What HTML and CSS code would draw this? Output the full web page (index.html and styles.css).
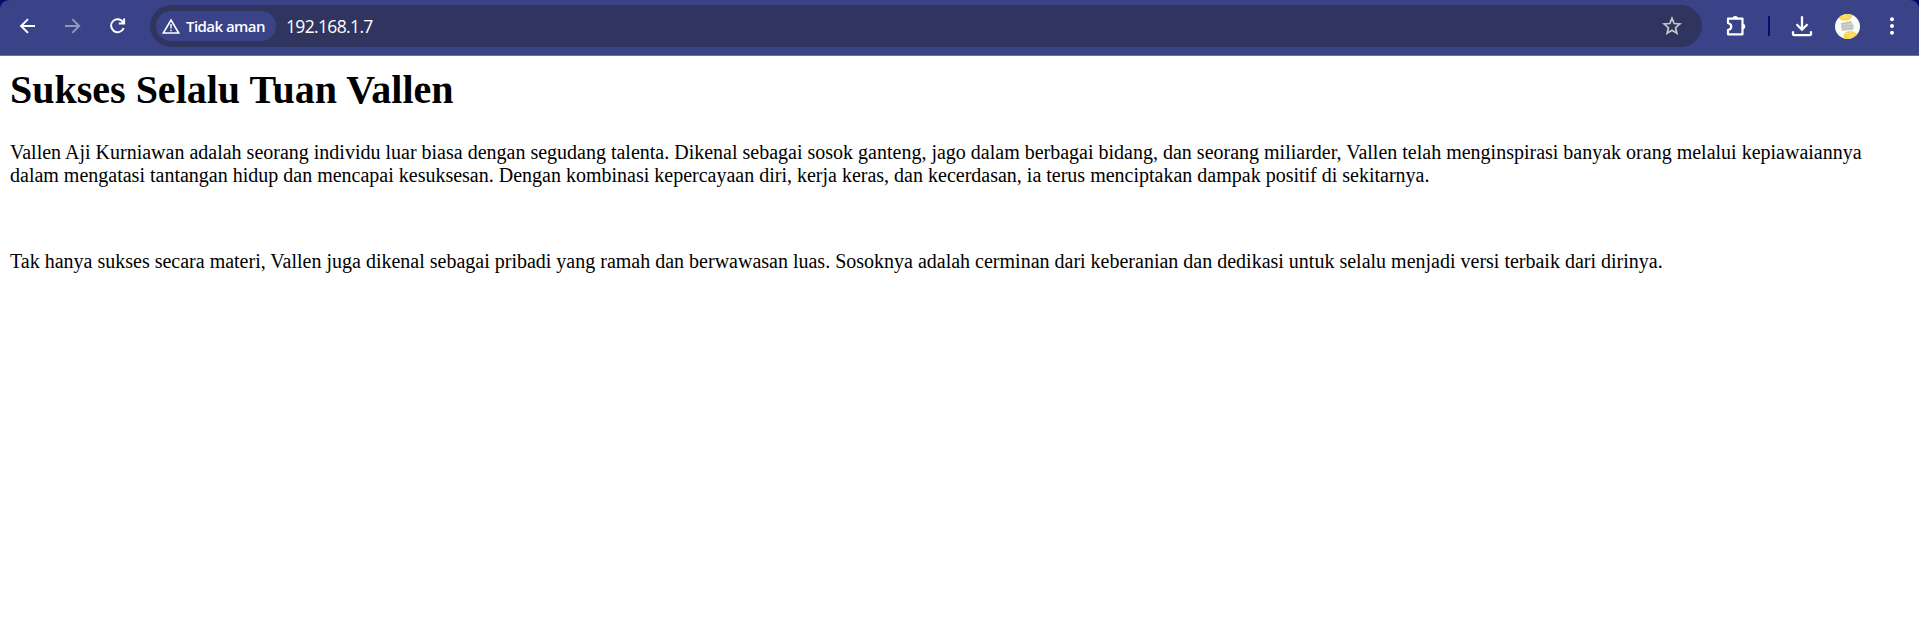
FILE: index.html
```html
<!DOCTYPE html>
<html lang="id">
<head>
<meta charset="utf-8">
<title>192.168.1.7</title>
<link rel="stylesheet" href="styles.css">
</head>
<body>
<div class="frame">
<header class="toolbar">
  <div class="nav">
    <svg class="icon" viewBox="0 0 20 20"><path d="M17 10H3.500M10 3.100L3.100 10l6.900 6.900" /></svg>
    <svg class="icon dim" viewBox="0 0 20 20"><path d="M2 10h13.500M9.300 3.100l6.900 6.900L9.300 16.900" /></svg>
    <svg class="icon" viewBox="0 0 20 20"><path d="M15.300 6.500A6.500 6.500 0 1 0 15.700 12M16.100 2.600V7.600H10.800" /></svg>
  </div>
  <div class="omnibox">
    <div class="chip">
      <svg class="warn" viewBox="0 0 20 18"><path d="M10 3L17.700 16H2.300Z"/><path class="mark" d="M10 7v4.500M10 12.800v1.500"/></svg>
      <span class="chip-label">Tidak aman</span>
    </div>
    <span class="url">192.168.1.7</span>
    <svg class="star" viewBox="0 0 20 20"><path d="M10 2.300L12.200 7.500L17.900 8L13.600 11.700L14.900 17.200L10 14.300L5.100 17.200L6.400 11.700L2.100 8L7.800 7.500Z"/></svg>
  </div>
  <div class="actions">
    <svg class="ext" viewBox="0 0 24 24"><path d="M4 4.700H18.500V20.300H4V16Q7.300 15.200 7.300 12.500T4 9Z"/><path class="fill" d="M8.500 4.700a2.800 2.800 0 0 1 5.600 0zM18.500 9.700a2.800 2.800 0 0 1 0 5.600z"/></svg>
    <span class="divider"></span>
    <svg class="download" viewBox="0 0 24 24"><path d="M12 2.200V15M6.500 10.300L12 15.700L17.500 10.300M3 17.300V20.200Q3 21.200 4 21.200H20Q21 21.200 21 20.200V17.300"/></svg>
    <svg class="avatar" viewBox="0 0 25 25">
      <defs><clipPath id="disc"><circle cx="12.500" cy="12.500" r="12.500"/></clipPath></defs>
      <g clip-path="url(#disc)">
        <rect width="25" height="25" fill="#fbfbf8"/>
        <ellipse cx="10" cy="1.500" rx="7" ry="5.300" fill="#f8d650"/>
        <ellipse cx="15.500" cy="22.500" rx="7" ry="5.500" fill="#f8d650"/>
        <path d="M10 1v5M10 1l4 4M10 1L6 5M15.500 23v-5M15.500 23l4-4M15.500 23l-4-4" stroke="#fcebac" stroke-width=".8"/>
        <path d="M6 9l10-2 1 2 2 3-1 4-11 1-1-4z" fill="#d0d0cf"/>
        <path d="M6 10l11-2M7 12.500l11-1M7 15l11-1" stroke="#a9a9a9" stroke-width=".8" stroke-dasharray="2 .7"/>
      </g>
    </svg>
    <svg class="menu" viewBox="0 0 6 20"><circle cx="3" cy="3.200" r="2"/><circle cx="3" cy="10" r="2"/><circle cx="3" cy="16.800" r="2"/></svg>
  </div>
</header>
</div>
<main class="page">
  <h1>Sukses Selalu Tuan Vallen</h1>
  <p>Vallen Aji Kurniawan adalah seorang individu luar biasa dengan segudang talenta. Dikenal sebagai sosok ganteng, jago dalam berbagai bidang, dan seorang miliarder, Vallen telah menginspirasi banyak orang melalui kepiawaiannya dalam mengatasi tantangan hidup dan mencapai kesuksesan. Dengan kombinasi kepercayaan diri, kerja keras, dan kecerdasan, ia terus menciptakan dampak positif di sekitarnya.</p>
  <br>
  <p>Tak hanya sukses secara materi, Vallen juga dikenal sebagai pribadi yang ramah dan berwawasan luas. Sosoknya adalah cerminan dari keberanian dan dedikasi untuk selalu menjadi versi terbaik dari dirinya.</p>
</main>
</body>
</html>
```
FILE: styles.css
```css
body { margin: 0; background: #fff; color: #000; }
svg { display: block; flex: none; fill: none; stroke: #fff; }
.frame { background: #00106e; }
.toolbar {
  display: flex;
  align-items: center;
  box-sizing: border-box;
  height: 56px;
  padding: 0 24px 3px 18px;
  background: #3a4387;
  border-bottom: 1px solid #6a70a6;
  border-radius: 9px 9px 0 0;
}
.nav { display: flex; gap: 25px; width: 132px; }
.icon { width: 20px; height: 20px; stroke-width: 2; }
.dim { opacity: .45; }
.omnibox {
  display: flex;
  align-items: center;
  flex: 1;
  box-sizing: border-box;
  height: 42px;
  padding: 0 20px 0 6px;
  background: #30355f;
  border-radius: 21px;
}
.chip {
  display: flex;
  align-items: center;
  box-sizing: border-box;
  width: 120px;
  height: 30px;
  padding-left: 5px;
  gap: 5px;
  background: #3a4387;
  border-radius: 15px;
}
.warn { width: 20px; height: 18px; stroke-width: 1.6; }
.mark { stroke-width: 1.4; }
.chip-label {
  color: #fff;
  font: 600 15px/20px "Open Sans", sans-serif;
  letter-spacing: -.55px;
  white-space: nowrap;
}
.url {
  flex: 1;
  margin-left: 10px;
  color: #fff;
  font: 17.500px/24px "Open Sans", sans-serif;
  letter-spacing: -.65px;
}
.star { width: 20px; height: 20px; stroke: #c7c7c7; stroke-width: 1.7; }
.actions { display: flex; align-items: center; margin-left: 22px; }
.ext { width: 24px; height: 24px; stroke-width: 2.2; stroke-linejoin: round; }
.ext .fill { fill: #fff; stroke: none; }
.divider { width: 2px; height: 20px; margin: 0 20px; background: #00106e; }
.download { width: 24px; height: 24px; stroke-width: 2.300; }
.avatar { width: 25px; height: 25px; margin: 0 29px 0 21px; stroke: none; }
.menu { width: 6px; height: 20px; fill: #fff; stroke: none; }
.page { padding: 11px 10px 10px; font: 20px/23px "Liberation Serif", serif; }
.page h1 { margin: 0 0 28px; font-size: 40px; line-height: 46px; }
.page p { margin: 20px 0; }
```
